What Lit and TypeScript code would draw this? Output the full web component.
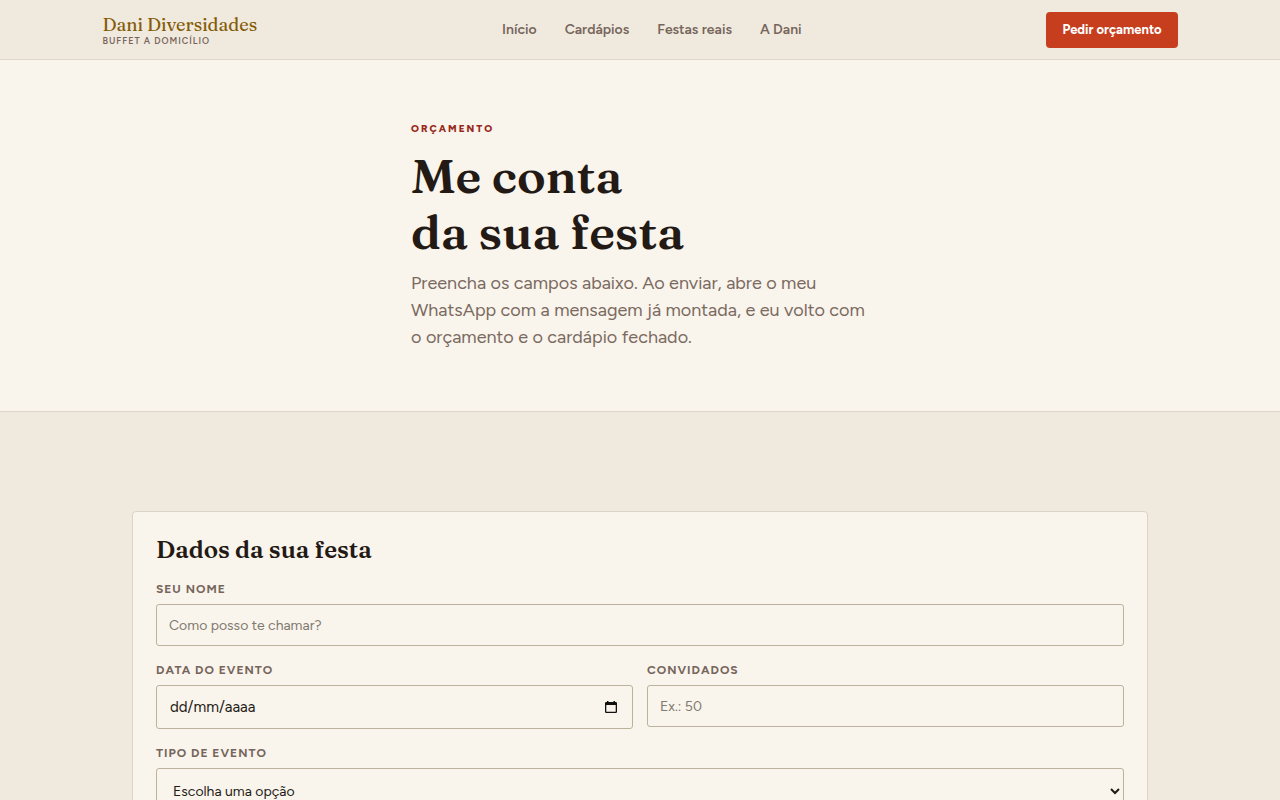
import { LitElement, html, css } from "lit";
import { customElement } from "lit/decorators.js";

@customElement("app-root")
export class AppRoot extends LitElement {
  static styles = css`
    :host {
      display: block;
      min-height: 100vh;
      background: #f0e9dd;
      color: #231a15;
      font-family: Figtree, Lato, "Open Sans", sans-serif;
      font-size: 16px;
      line-height: 24px;
    }
    * {
      box-sizing: border-box;
    }
    h1,
    h2,
    p {
      margin: 0;
    }
    .bar {
      border-bottom: 1px solid #dfd5ca;
    }
    .bar-inner {
      width: 84%;
      max-width: 1120px;
      margin: 0 auto;
      padding: 12px 0 11px;
      display: flex;
      align-items: center;
      justify-content: space-between;
    }
    .brand {
      display: flex;
      flex-direction: column;
      text-decoration: none;
    }
    .brand-name {
      font-family: Fraunces, "Liberation Serif", serif;
      font-weight: 500;
      font-size: 18px;
      line-height: 22px;
      color: #845c08;
    }
    .brand-tag {
      font-size: 9px;
      line-height: 10px;
      font-weight: 600;
      letter-spacing: 1px;
      text-transform: uppercase;
      color: #75655b;
    }
    .links {
      display: flex;
      gap: 28px;
    }
    .links a {
      color: #75655b;
      font-size: 14px;
      line-height: 20px;
      font-weight: 600;
      text-decoration: none;
    }
    .cta {
      background: #c63e1e;
      color: #fff;
      border-radius: 4px;
      padding: 8px 16px;
      font-size: 13px;
      line-height: 20px;
      font-weight: 700;
      text-decoration: none;
    }
    .hero {
      background: #f9f4ec;
      border-bottom: 1px solid #dfd5ca;
      padding: 60px 24px;
    }
    .hero-inner {
      max-width: 458px;
      margin: 0 auto;
    }
    .eyebrow {
      font-size: 10px;
      line-height: 18px;
      font-weight: 800;
      letter-spacing: 2px;
      text-transform: uppercase;
      color: #97291a;
    }
    h1 {
      font-family: Fraunces, "Liberation Serif", serif;
      font-size: 48px;
      line-height: 56px;
      font-weight: 600;
      margin: 10px 0;
    }
    .lead {
      font-size: 18px;
      line-height: 27px;
      color: #7a6a60;
    }
    .panel-area {
      padding: 99px 24px;
    }
    .card {
      max-width: 1016px;
      margin: 0 auto;
      padding: 23px;
      background: #f9f4ec;
      border: 1px solid #dcd3c4;
      border-radius: 4px;
    }
    h2 {
      font-family: Fraunces, "Liberation Serif", serif;
      font-size: 24px;
      line-height: 30px;
      font-weight: 600;
      margin-bottom: 14px;
    }
    form {
      display: flex;
      flex-direction: column;
      gap: 14px;
    }
    .pair {
      display: grid;
      grid-template-columns: 1fr 1fr;
      gap: 14px;
      align-items: start;
    }
    .field {
      display: flex;
      flex-direction: column;
      gap: 5px;
    }
    label {
      font-size: 12px;
      line-height: 20px;
      font-weight: 700;
      letter-spacing: 1px;
      text-transform: uppercase;
      color: #75655b;
    }
    .control {
      width: 100%;
      height: 42px;
      padding: 0 12px;
      border: 1px solid #bdb29e;
      border-radius: 3px;
      background: #f9f4ec;
      color: #231a15;
      font: inherit;
      font-size: 14px;
    }
    .control::placeholder {
      color: #80796f;
      opacity: 1;
    }
    .date {
      height: 44px;
      display: flex;
      align-items: center;
      padding-right: 14px;
      font-size: 15px;
    }
    .date input {
      flex: 1;
      min-width: 0;
      padding: 0 1px;
      border: 0;
      background: none;
      font: inherit;
      color: inherit;
    }
    .date input::placeholder {
      color: #231a15;
      opacity: 1;
    }
    .date button {
      display: flex;
      padding: 0;
      border: 0;
      background: none;
      color: #111;
    }
    select.control {
      height: 46px;
      padding-right: 0;
    }
  `;

  render() {
    return html`
      <header class="bar">
        <div class="bar-inner">
          <a class="brand" href="#inicio">
            <span class="brand-name">Dani Diversidades</span>
            <span class="brand-tag">Buffet a domicílio</span>
          </a>
          <nav class="links">
            <a href="#inicio">Início</a>
            <a href="#cardapios">Cardápios</a>
            <a href="#festas">Festas reais</a>
            <a href="#dani">A Dani</a>
          </nav>
          <a class="cta" href="#orcamento">Pedir orçamento</a>
        </div>
      </header>
      <main>
        <section class="hero">
          <div class="hero-inner">
            <p class="eyebrow">Orçamento</p>
            <h1>Me conta<br />da sua festa</h1>
            <p class="lead">
              Preencha os campos abaixo. Ao enviar, abre o meu WhatsApp com a
              mensagem já montada, e eu volto com o orçamento e o cardápio
              fechado.
            </p>
          </div>
        </section>
        <section class="panel-area" id="orcamento">
          <div class="card">
            <h2>Dados da sua festa</h2>
            <form>
              <div class="field">
                <label for="nome">Seu nome</label>
                <input class="control" id="nome" type="text" placeholder="Como posso te chamar?" />
              </div>
              <div class="pair">
                <div class="field">
                  <label for="data">Data do evento</label>
                  <div class="control date">
                    <input id="data" type="text" inputmode="numeric" placeholder="dd/mm/aaaa" />
                    <button type="button" aria-label="Abrir calendário">
                      <svg width="14" height="14" viewBox="0 0 14 14" fill="currentColor">
                        <path fill-rule="evenodd" d="M3 1h1.500v1h5V1H11v1h.8Q13 2 13 3.200v8.600Q13 13 11.800 13H2.200Q1 13 1 11.800V3.200Q1 2 2.200 2H3zM2.300 5v6.700h9.400V5z" />
                      </svg>
                    </button>
                  </div>
                </div>
                <div class="field">
                  <label for="convidados">Convidados</label>
                  <input class="control" id="convidados" type="number" placeholder="Ex.: 50" />
                </div>
              </div>
              <div class="field">
                <label for="tipo">Tipo de evento</label>
                <select class="control" id="tipo">
                  <option>Escolha uma opção</option>
                </select>
              </div>
            </form>
          </div>
        </section>
      </main>
    `;
  }
}
